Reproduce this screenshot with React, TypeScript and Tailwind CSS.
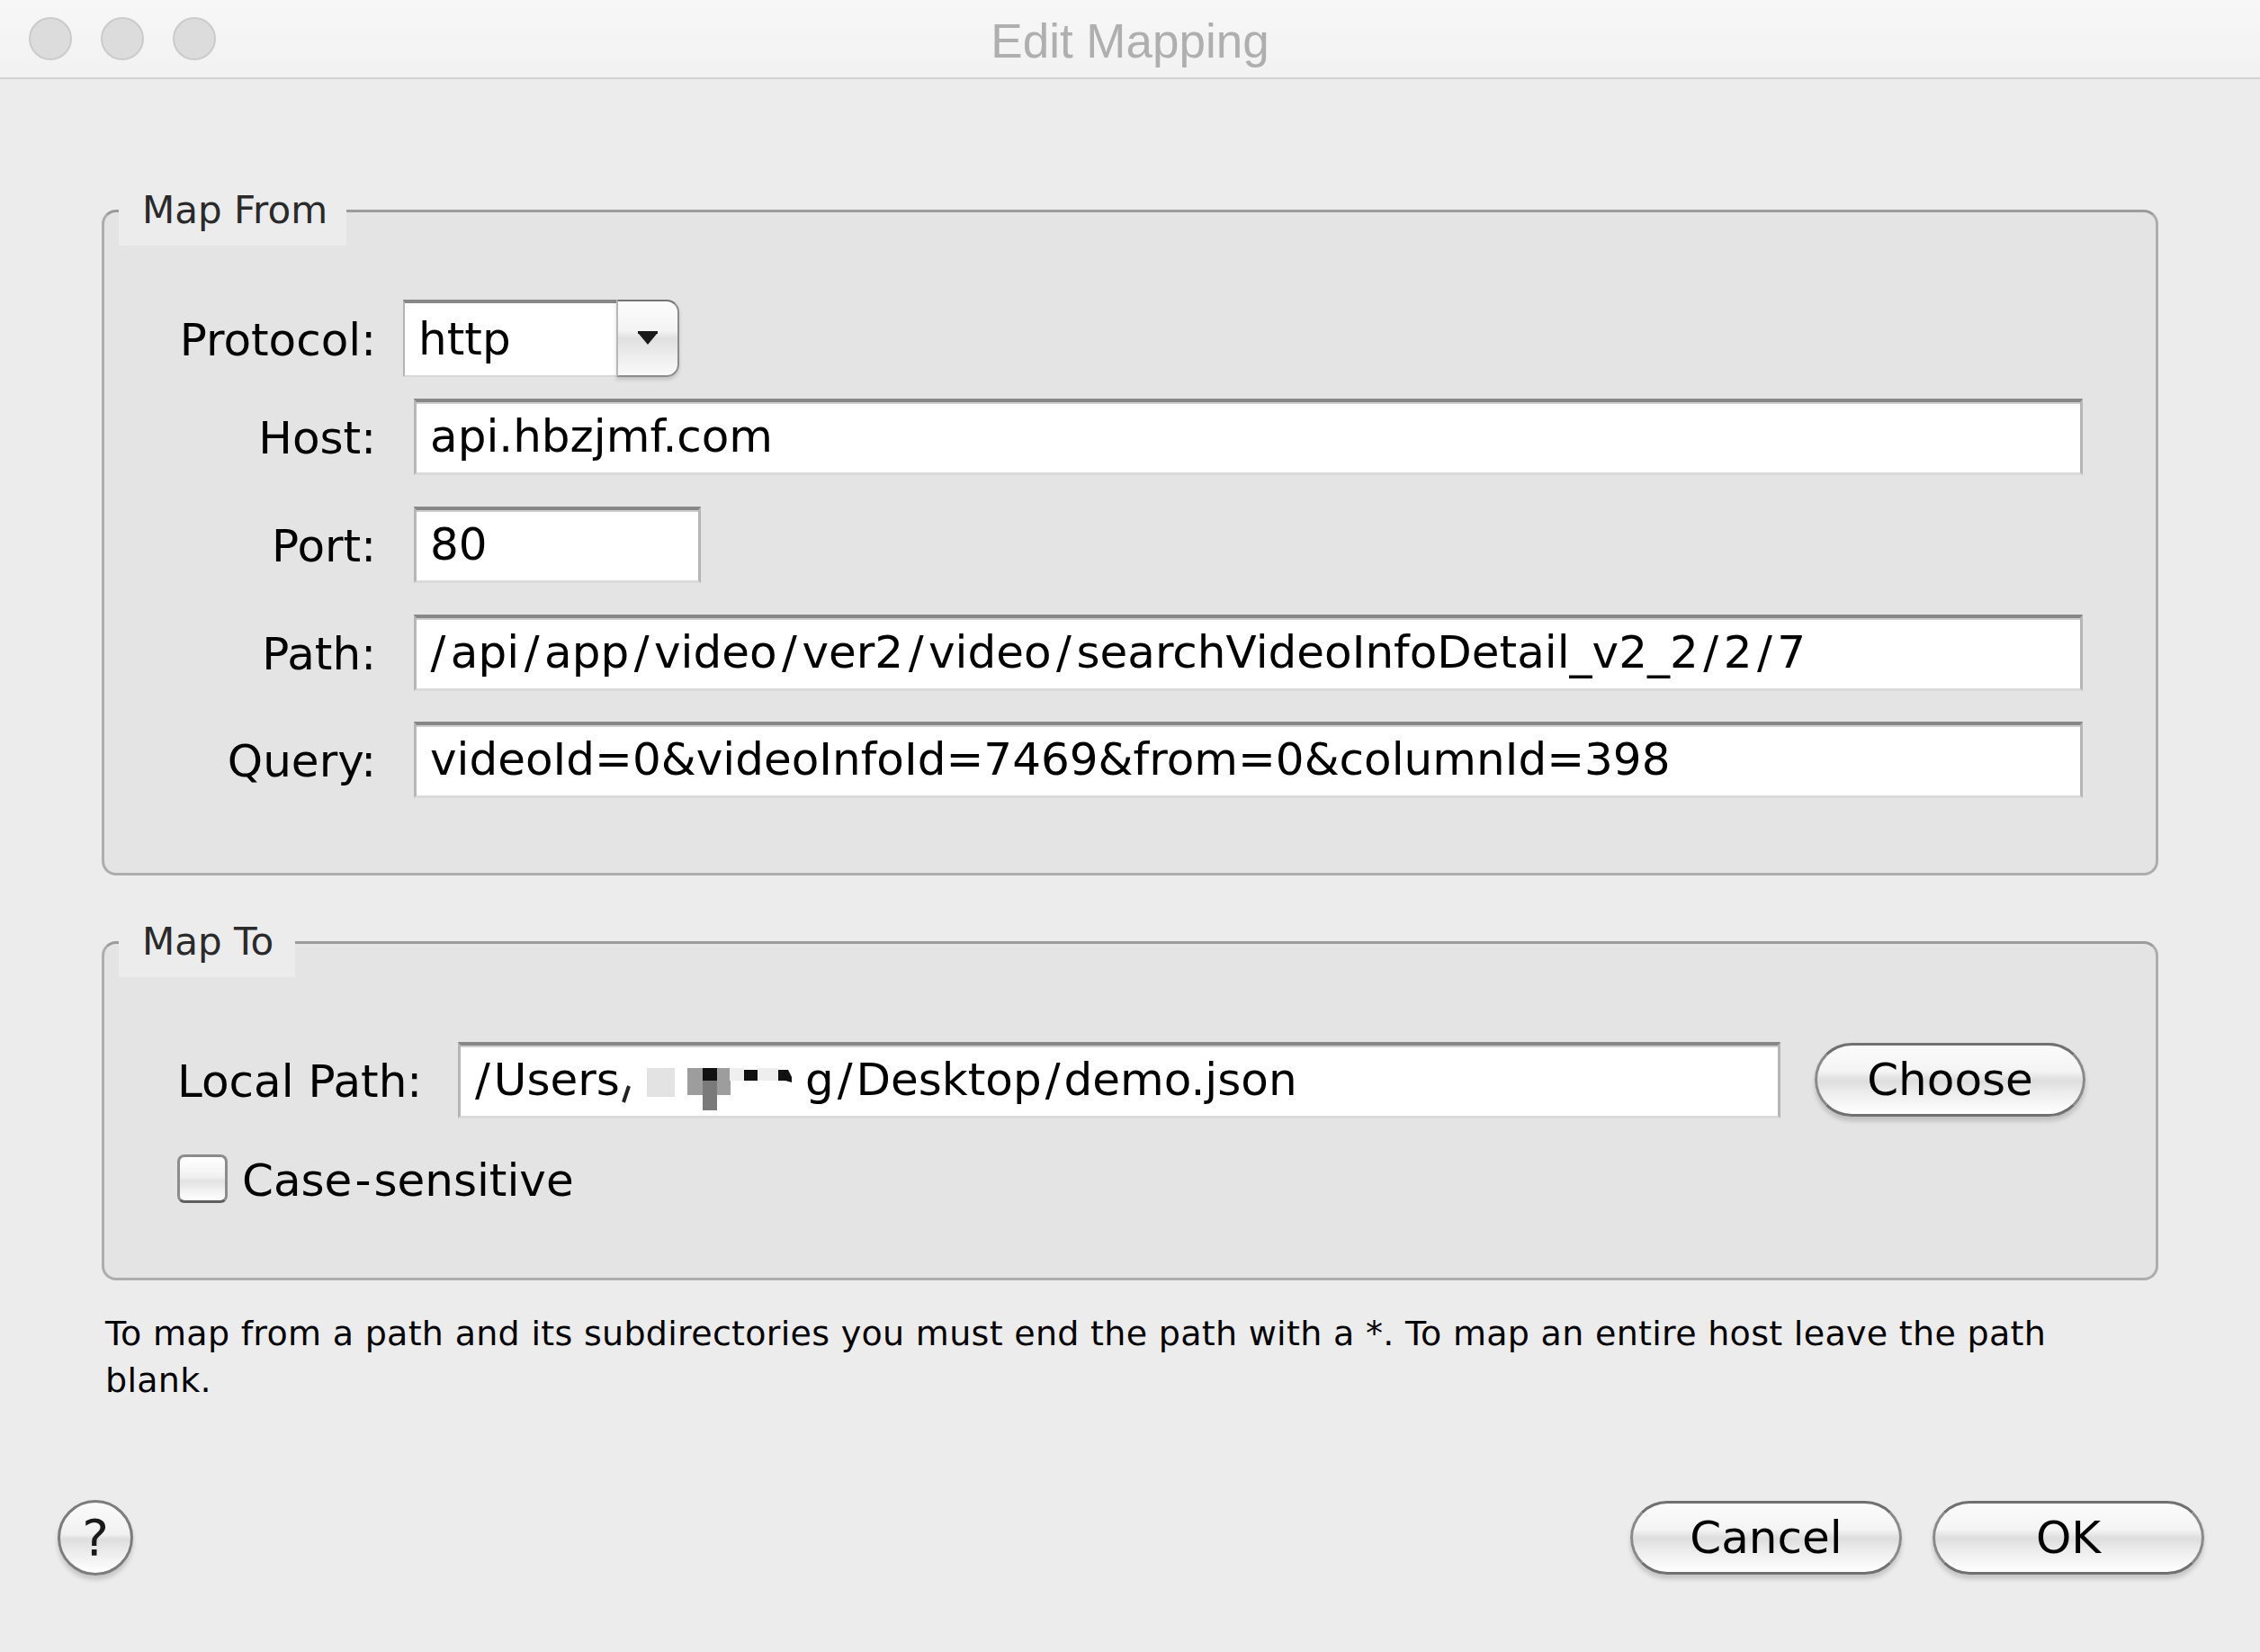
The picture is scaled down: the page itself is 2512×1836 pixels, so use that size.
import React from "react";

const fieldCls =
  "bg-white h-[85px] border-t-[4px] border-t-[#878787] border-x-[3px] border-x-[#b6b6b6] border-b-[3px] border-b-[#dadada] shadow-[inset_0_2px_0_#d0d0d0] flex items-center pl-[15px] text-[50px] text-black whitespace-nowrap overflow-hidden";

const aquaBtn =
  "rounded-full border-[3px] border-[#707070] border-x-[#8a8a8a] bg-[linear-gradient(to_bottom,#fbfbfb_0%,#f4f4f4_38%,#e2e2e2_48%,#dedede_52%,#ececec_68%,#ffffff_100%)] shadow-[0_5px_5px_rgba(0,0,0,0.16)] flex items-center justify-center text-black";

function Row({ label, children }: { label: string; children: React.ReactNode }) {
  return (
    <div className="flex items-center h-[86px]">
      <div className="w-[302px] shrink-0 text-right text-[50px] leading-none text-black pt-[4px]">{label}</div>
      {children}
    </div>
  );
}

function Legend({ children, width }: { children: React.ReactNode; width: string }) {
  return (
    <legend
      className={`ml-[16px] pl-[26px] pr-[17px] h-[78px] leading-[78px] bg-[#ececec] text-[42px] text-[#2a2a2a] ${width}`}
    >
      {children}
    </legend>
  );
}

function SlashText({ text, wide }: { text: string; wide?: boolean }) {
  const parts = text.split("/");
  return (
    <>
      {parts.map((p, i) => (
        <React.Fragment key={i}>
          {i > 0 && <span className={wide ? "mx-[5.5px]" : "mx-[4px]"}>/</span>}
          {p}
        </React.Fragment>
      ))}
    </>
  );
}

export default function App() {
  return (
    <div className="w-[2512px] h-[1836px] bg-[#ececec] flex flex-col overflow-hidden font-['DejaVu_Sans',sans-serif]">
      {/* Title bar */}
      <div className="h-[88px] shrink-0 grid grid-cols-[1fr_auto_1fr] items-center bg-[linear-gradient(to_bottom,#f7f7f7,#f2f2f2)] border-b-2 border-[#d2d2d2]">
        <div className="flex items-center gap-[32px] pl-[32px]">
          <div className="w-[48px] h-[48px] rounded-full bg-[#dcdcdc] border-2 border-[#cbcbcb]" />
          <div className="w-[48px] h-[48px] rounded-full bg-[#dcdcdc] border-2 border-[#cbcbcb]" />
          <div className="w-[48px] h-[48px] rounded-full bg-[#dcdcdc] border-2 border-[#cbcbcb]" />
        </div>
        <div className="pt-[5px] text-[53px] leading-none text-[#afafaf] font-['Liberation_Sans',Arial,sans-serif]">
          Edit Mapping
        </div>
        <div />
      </div>

      {/* Map From */}
      <fieldset className="mt-[107px] mx-[113px] p-0 min-w-0 border-[3px] border-[#adadad] border-t-[#9c9c9c] rounded-[16px] bg-[#e4e4e4]">
        <Legend width="w-[253px]">Map From</Legend>
        <div className="pt-[60px] pb-[83px] pr-[81px] flex flex-col">
          <Row label="Protocol:">
            <div className="ml-[30px] w-[307px] h-[86px] flex">
              <div className="flex-1 bg-white border-t-[4px] border-t-[#878787] border-l-[2px] border-l-[#b4b4b4] border-b-[2px] border-b-[#d8d8d8] flex items-center pl-[15px] text-[50px] text-black">
                http
              </div>
              <div className="w-[70px] h-full rounded-r-[14px] border-[2px] border-[#8c8c8c] border-t-[#747474] border-l-[#b8b8b8] bg-[linear-gradient(to_bottom,#fdfdfd_0%,#f3f3f3_40%,#e0e0e0_50%,#ebebeb_70%,#fafafa_100%)] shadow-[0_3px_4px_rgba(0,0,0,0.15)] flex items-center justify-center">
                <svg width="22" height="16" viewBox="0 0 22 16">
                  <rect x="0" y="0" width="22" height="3" fill="#1a1a1a" />
                  <polygon points="1,3 21,3 11,15" fill="#1a1a1a" />
                </svg>
              </div>
            </div>
          </Row>
          <div className="mt-[23px]">
            <Row label="Host:">
              <div className={`ml-[42px] flex-1 ${fieldCls}`}>api.hbzjmf.com</div>
            </Row>
          </div>
          <div className="mt-[34px]">
            <Row label="Port:">
              <div className={`ml-[42px] w-[319px] ${fieldCls}`}>80</div>
            </Row>
          </div>
          <div className="mt-[34px]">
            <Row label="Path:">
              <div className={`ml-[42px] flex-1 ${fieldCls}`}>
                <span className="-ml-[5px]">
                  <SlashText wide text="/api/app/video/ver2/video/searchVideoInfoDetail_v2_2/2/7" />
                </span>
              </div>
            </Row>
          </div>
          <div className="mt-[33px]">
            <Row label="Query:">
              <div className={`ml-[42px] flex-1 ${fieldCls}`}>videoId=0&amp;videoInfoId=7469&amp;from=0&amp;columnId=398</div>
            </Row>
          </div>
        </div>
      </fieldset>

      {/* Map To */}
      <fieldset className="mt-[35px] mx-[113px] p-0 min-w-0 border-[3px] border-[#adadad] border-t-[#9c9c9c] rounded-[16px] bg-[#e4e4e4]">
        <Legend width="w-[196px]">Map To</Legend>
        <div className="pt-[71px] pb-[83px] pl-[81px] pr-[78px] flex flex-col">
          <div className="flex items-center h-[86px]">
            <div className="w-[312px] shrink-0 text-[50px] leading-none text-black pt-[4px]">Local Path:</div>
            <div className={`flex-1 ${fieldCls}`}>
              <span className="-ml-[3px]">
                <SlashText text="/Users" />
              </span>
              <svg width="206" height="64" viewBox="0 0 206 64" className="shrink-0 mt-[8px]">
                <line x1="4" y1="52" x2="10" y2="34" stroke="#222" strokeWidth="4" />
                <rect x="30" y="14" width="31" height="32" fill="#e3e3e3" />
                <rect x="75" y="14" width="48" height="30" fill="#9d9d9d" />
                <rect x="92" y="14" width="16" height="14" fill="#111" />
                <rect x="92" y="28" width="16" height="33" fill="#7a7a7a" />
                <rect x="122" y="14" width="16" height="14" fill="#efefef" />
                <rect x="138" y="16" width="15" height="12" fill="#111" />
                <rect x="153" y="14" width="23" height="14" fill="#eeeeee" />
                <polygon points="176,16 187,16 191,24 191,30 184,28 176,28" fill="#111" />
              </svg>
              <span>
                <SlashText text="g/Desktop/demo.json" />
              </span>
            </div>
            <button className={`ml-[38px] w-[301px] h-[82px] text-[50px] ${aquaBtn}`}>Choose</button>
          </div>
          <div className="mt-[40px] flex items-center h-[54px]">
            <div className="w-[56px] h-[54px] rounded-[8px] border-[3px] border-[#8c8c8c] border-b-[#5e5e5e] bg-[linear-gradient(to_bottom,#ffffff_0%,#f1f1f1_45%,#e2e2e2_55%,#f3f3f3_80%,#ffffff_100%)]" />
            <div className="ml-[16px] text-[50px] leading-none text-black pt-[4px]">
              Case<span className="mx-[3px]">-</span>sensitive
            </div>
          </div>
        </div>
      </fieldset>

      {/* Help text */}
      <p className="mt-[33px] ml-[117px] w-[2240px] text-[38px] tracking-[0.3px] leading-[52px] text-black">
        To map from a path and its subdirectories you must end the path with a *. To map an entire host leave the path blank.
      </p>

      {/* Bottom buttons */}
      <div className="mt-auto pb-[85px] flex items-center">
        <div className="ml-[64px] w-[84px] h-[84px] rounded-full border-[3px] border-[#7c7c7c] bg-[linear-gradient(to_bottom,#fbfbfb_0%,#f1f1f1_45%,#dedede_52%,#ececec_70%,#ffffff_100%)] shadow-[0_5px_5px_rgba(0,0,0,0.16)] flex items-center justify-center text-[56px] leading-none text-[#1a1a1a]">
          ?
        </div>
        <div className="ml-auto mr-[62px] flex gap-[34px]">
          <button className={`w-[302px] h-[82px] text-[50px] ${aquaBtn}`}>Cancel</button>
          <button className={`w-[302px] h-[82px] text-[50px] ${aquaBtn}`}>OK</button>
        </div>
      </div>
    </div>
  );
}
